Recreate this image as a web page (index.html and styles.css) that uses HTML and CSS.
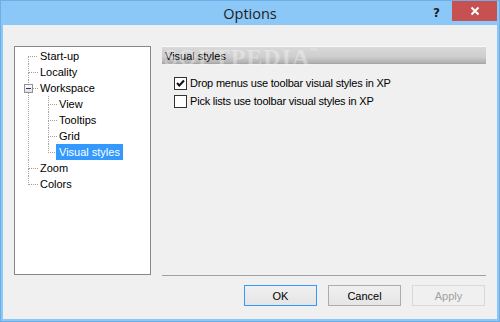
FILE: index.html
```html
<!DOCTYPE html>
<html lang="en">
<head>
    <meta charset="UTF-8">
    <title>Options</title>
    <link rel="stylesheet" href="styles.css">
</head>
<body>

    <div class="window">
        <!-- Title bar -->
        <div class="titlebar">
            <span class="title">Options</span>
            <span class="help">?</span>
            <span class="close">
                <svg width="10" height="10" viewBox="0 0 10 10">
                    <path d="M1.5 1.5 L8.5 8.5 M8.5 1.5 L1.5 8.5" stroke="#fff" stroke-width="2"/>
                </svg>
            </span>
        </div>

        <div class="client">
            <div class="main">
                <!-- Category tree -->
                <div class="tree-box">
                    <ul class="tree">
                        <li><span class="label">Start-up</span></li>
                        <li><span class="label">Locality</span></li>
                        <li>
                            <span class="expander"></span>
                            <span class="label">Workspace</span>
                            <ul>
                                <li><span class="label">View</span></li>
                                <li><span class="label">Tooltips</span></li>
                                <li><span class="label">Grid</span></li>
                                <li><span class="label selected">Visual styles</span></li>
                            </ul>
                        </li>
                        <li><span class="label">Zoom</span></li>
                        <li><span class="label">Colors</span></li>
                    </ul>
                </div>

                <!-- Page -->
                <div class="page">
                    <div class="page-header">Visual styles</div>
                    <div class="watermark">SOFTPEDIA<sup>™</sup></div>

                    <label class="option">
                        <span class="checkbox">
                            <svg width="11" height="11" viewBox="0 0 11 11">
                                <path d="M2 5 L4.3 7.5 L9 2.5" stroke="#111" stroke-width="2" fill="none"/>
                            </svg>
                        </span>
                        Drop menus use toolbar visual styles in XP
                    </label>
                    <label class="option">
                        <span class="checkbox"></span>
                        Pick lists use toolbar visual styles in XP
                    </label>
                </div>
            </div>

            <!-- Dialog buttons -->
            <div class="buttons">
                <button class="btn default">OK</button>
                <button class="btn">Cancel</button>
                <button class="btn disabled">Apply</button>
            </div>
        </div>
    </div>

</body>
</html>
```

FILE: styles.css
```css
/* Reset */
* {
    margin: 0;
    padding: 0;
    box-sizing: border-box;
}

body {
    font-family: 'Liberation Sans', Arial, sans-serif;
    font-size: 11px;
    color: #000;
    background: #8bc7f7;
}

/* Window frame */
.window {
    width: 500px;
    height: 322px;
    display: flex;
    flex-direction: column;
    background: #8bc7f7;
    border: 1px solid #6eaee6;
    padding: 0 2px 2px 2px;
}

/* Title bar */
.titlebar {
    height: 24px;
    flex: none;
    display: flex;
    justify-content: flex-end;
    align-items: flex-start;
    position: relative;
}

.title {
    position: absolute;
    left: 0;
    right: 0;
    top: 3px;
    text-align: center;
    font-family: 'Open Sans', 'Noto Sans', sans-serif;
    font-size: 14.5px;
    line-height: 20px;
    color: #1e1e1e;
}

.help {
    font-family: 'DejaVu Sans', sans-serif;
    font-weight: bold;
    font-size: 12px;
    line-height: 20px;
    color: #202020;
    margin: 2px 12px 0 0;
}

.close {
    width: 45px;
    height: 20px;
    background: #c75050;
    display: flex;
    justify-content: center;
    align-items: center;
}

/* Client area */
.client {
    flex: 1;
    background: #f0f0f0;
    padding: 21px 11px 0 11px;
    display: flex;
    flex-direction: column;
}

.main {
    display: flex;
    align-items: flex-start;
    gap: 11px;
}

/* Tree view */
.tree-box {
    width: 137px;
    height: 229px;
    background: #fff;
    border: 1px solid #828790;
}

.tree,
.tree ul {
    list-style: none;
}

.tree {
    padding: 1px 0 0 13px;
}

.tree ul {
    padding-left: 20px;
}

.tree li {
    position: relative;
}

/* dotted connectors */
.tree li::before {
    content: "";
    position: absolute;
    left: 0;
    top: 0;
    width: 9px;
    height: 8px;
    border-left: 1px dotted #a0a0a0;
    border-bottom: 1px dotted #a0a0a0;
}

.tree > li:first-child::before {
    border-left: none;
}

.tree li:not(:last-child)::after {
    content: "";
    position: absolute;
    left: 0;
    top: 8px;
    bottom: 0;
    border-left: 1px dotted #a0a0a0;
}

.tree ul li::before {
    width: 8px;
}

.label {
    display: inline-block;
    position: relative;
    height: 16px;
    line-height: 16px;
    margin-left: 10px;
    padding: 0 2px;
    white-space: nowrap;
}

.tree ul .label {
    margin-left: 8px;
    padding: 0 3px;
}

.label.selected {
    background: #3399ff;
    color: #fff;
}

/* the [-] box on Workspace */
.expander {
    position: absolute;
    left: -4px;
    top: 4px;
    width: 9px;
    height: 9px;
    border: 1px solid #919191;
    background: linear-gradient(#ffffff, #e0e0e0);
    z-index: 1;
}

.expander::after {
    content: "";
    position: absolute;
    left: 1px;
    top: 3px;
    width: 5px;
    height: 1px;
    background: #1e3287;
}

/* Right page */
.page {
    flex: 1;
    height: 230px;
    border-bottom: 1px solid #a0a0a0;
    position: relative;
}

.page-header {
    height: 18px;
    line-height: 18px;
    padding-left: 3px;
    border-top: 1px solid #fafafa;
    background: linear-gradient(#d8d8d8, #cfcfcf 55%, #b4b4b4 90%, #a2a2a2);
    margin-bottom: 10px;
}

/* Softpedia watermark */
.watermark {
    position: absolute;
    left: 2px;
    top: -2px;
    font-family: 'Liberation Serif', serif;
    font-weight: bold;
    font-size: 24px;
    letter-spacing: 1px;
    color: rgba(255, 255, 255, 0.35);
    pointer-events: none;
}

.watermark sup {
    font-size: 7px;
    vertical-align: 12px;
}

.option {
    display: flex;
    align-items: center;
    gap: 3px;
    height: 18px;
    padding-left: 12px;
    letter-spacing: -0.2px;
}

.checkbox {
    width: 13px;
    height: 13px;
    border: 1px solid #333;
    background: #fff;
    display: flex;
    justify-content: center;
    align-items: center;
}

/* Buttons */
.buttons {
    display: flex;
    justify-content: flex-end;
    gap: 11px;
    margin-top: 9px;
    padding-right: 1px;
}

.btn {
    width: 73px;
    height: 21px;
    font-family: 'Liberation Sans', Arial, sans-serif;
    font-size: 11px;
    color: #000;
    background: linear-gradient(#f0f0f0, #e5e5e5);
    border: 1px solid #acacac;
}

.btn.default {
    border-color: #3399ff;
}

.btn.disabled {
    color: #a0a0a0;
    background: #f0f0f0;
    border-color: #d9d9d9;
}
```
